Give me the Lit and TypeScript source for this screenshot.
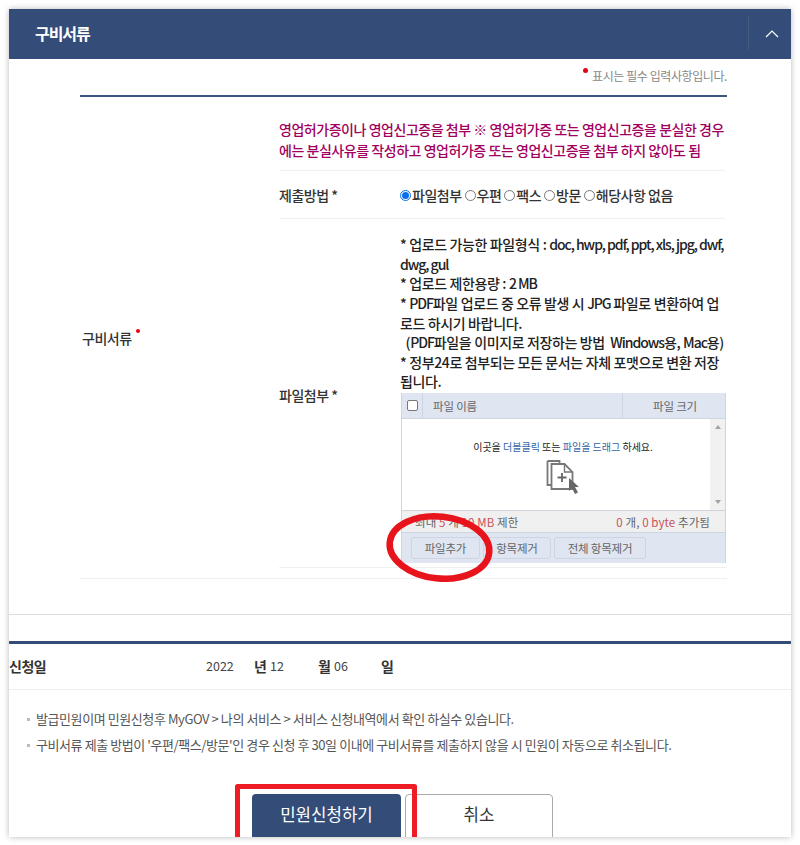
import { LitElement, html, css } from "lit";
import { customElement } from "lit/decorators.js";

@customElement("app-root")
export class AppRoot extends LitElement {
  static styles = css`
    :host { display: block; width: 800px; height: 845px; overflow: hidden; background: #fff;
      font-family: "Noto Sans CJK KR", "Liberation Sans", sans-serif; color: #333; position: relative; }
    * { box-sizing: border-box; }
    .panel { position: absolute; left: 9px; top: 9px; width: 782px; height: 828px; overflow: hidden; background: #fff;
      box-shadow: 0 0 6px rgba(0,0,0,.28); }
    .head { height: 50px; background: #344d78; color: #fff; display: flex; align-items: center; justify-content: space-between; padding-left: 26px; }
    .head h2 { margin: 0 0 3px; font-size: 16px; line-height: 20px; font-weight: 700; letter-spacing: -1.05px; }
    .toggle { width: 43px; height: 34px; border-left: 1px solid #46597f; display: flex; align-items: center; justify-content: center; margin-bottom: 2px; padding-left: 3px; }
    .body { margin: 0 64px 0 71px; }
    .note { height: 36px; display: flex; justify-content: flex-end; align-items: flex-start; padding-top: 8px; font-size: 12px; color: #888; line-height: 17px; letter-spacing: -.42px; }
    .note i { width: 5px; height: 5px; border-radius: 50%; background: #e60012; margin: 1px 4px 0 0; }
    .form { border-top: 2px solid #3d5480; display: flex; height: 484px; border-bottom: 1px solid #f0f0f0; }
    .label { width: 199px; flex: none; align-self: center; font-size: 14px; font-weight: 500; letter-spacing: -.5px; padding: 0 0 0 2px; display: flex; line-height: 20px; margin-top: 0; }
    .label i { width: 4px; height: 4px; border-radius: 50%; background: #e60012; margin: 1px 0 0 4px; }
    .cell { flex: 1; min-width: 0; }
    .warn { height: 74px; border-bottom: 1px solid #f0f0f0; padding-top: 22px; color: #a0005e; font-size: 14px; font-weight: 500; line-height: 20.5px; letter-spacing: -.46px; width: 446px; }
    .warn div { white-space: nowrap; }
    .row { display: flex; width: 446px; }
    .row.method { height: 48px; border-bottom: 1px solid #f0f0f0; align-items: center; }
    .rowlabel { width: 121px; flex: none; font-size: 14px; font-weight: 500; color: #333; letter-spacing: -.5px; }
    .radios { display: flex; align-items: center; font-size: 14px; font-weight: 500; letter-spacing: -.5px; white-space: nowrap; margin-top: 1px; }
    .r { width: 11px; height: 11px; border-radius: 50%; border: 1px solid #777; margin: 1px 1px 0 3px; flex: none; }
    .r.on { border: 1px solid #0b6fe8; margin-left: 0; position: relative; }
    .r.on::after { content: ""; position: absolute; left: 1px; top: 1px; width: 7px; height: 7px; border-radius: 50%; background: #0b6fe8; }
    .row.file { height: 349px; border-bottom: 1px solid #f0f0f0; align-items: center; width: 448px; }
    .row.file .rowlabel { margin-top: 4px; }
    .filecell { width: 326px; flex: none; align-self: flex-end; margin-bottom: 4px; }
    .rules { font-size: 14px; font-weight: 500; line-height: 19.6px; color: #222; letter-spacing: -.37px; white-space: nowrap; }
    .l { letter-spacing: -1.05px; }
    .up { height: 170px; margin-left: 1px; width: 325px; border: 1px solid #cdd5e2; border-top: 0; font-size: 11.5px; letter-spacing: -.2px; font-weight: 400; color: #666; margin-top: 1px; }
    .up .th { height: 26px; background: #dfe5f1; display: flex; align-items: center; border-bottom: 1px solid #cdd5e2; }
    .up .c0 { width: 21px; height: 100%; display: flex; align-items: center; justify-content: center; border-right: 1px solid #cdd5e2; }
    .up .c0 b { display: block; width: 11px; height: 11px; border: 1px solid #777; border-radius: 2px; background: #fff; margin-left: 1px; }
    .up .c1 { flex: 1; padding-left: 10px; height: 100%; display: flex; align-items: center; }
    .up .c2 { width: 103px; height: 100%; display: flex; align-items: center; justify-content: center; border-left: 1px solid #cdd5e2; padding-left: 2px; }
    .drop { height: 91px; display: flex; background: #fff; }
    .drop .main { flex: 1; display: flex; flex-direction: column; align-items: center; padding: 20px 0 0 14px; color: #222; font-size: 10px; letter-spacing: 0; line-height: 15px; }
    .drop .main span span { color: #2f63a8; }
    .drop .main svg { margin-top: 5px; }
    .scroll { width: 15px; background: #f1f1f1; display: flex; flex-direction: column; justify-content: space-between; align-items: center; padding: 6px 0; }
    .tri { width: 0; height: 0; border: 3.5px solid transparent; }
    .tri.u { border-bottom: 4px solid #a3a3a3; border-top: 0; }
    .tri.d { border-top: 4px solid #a3a3a3; border-bottom: 0; }
    .info { height: 23px; background: #f0f0f0; border-top: 1px solid #cfd3da; border-bottom: 1px solid #cdd5e2; display: flex; align-items: center; justify-content: space-between; padding: 0 15px 0 13px; letter-spacing: .1px; }
    .info em { font-style: normal; color: #c9505a; }
    .btns { height: 30px; background: #dfe5f1; display: flex; gap: 3px; padding: 4px 0 0 9px; }
    .btns span { height: 22px; border: 1px solid #cdd5e2; border-radius: 3px; display: flex; align-items: center; justify-content: center; }
    .b1 { width: 69px; }
    .b2 { width: 68px; }
    .b3 { width: 92px; }
    .sep1 { border-bottom: 1px solid #ddd; height: 36px; }
    .navy { margin-top: 26px; height: 3px; background: #344d78; }
    .date { height: 46px; border-bottom: 1px solid #f0f0f0; display: flex; align-items: center; font-size: 12.5px; color: #444; padding-bottom: 2px; }
    .date b { font-weight: 700; font-size: 14px; color: #333; letter-spacing: -.5px; width: 16px; flex: none; }
    .date .title { width: 197px; }
    .date .y { width: 48px; }
    .date .m1 { width: 48px; }
    .date .m2 { width: 47px; }
    .notes { margin: 20px 0 0 18px; padding: 0; list-style: none; font-size: 13px; color: #555; letter-spacing: -.42px; line-height: 18px; }
    .notes li { display: flex; align-items: center; margin-bottom: 8px; white-space: pre; }
    .notes li::before { content: ""; width: 3px; height: 3px; background: #bbb; margin-right: 6px; flex: none; }
    .actions { display: flex; margin: 40px 0 0 243px; }
    .actions div { height: 50px; border-radius: 4px 4px 0 0; display: flex; align-items: center; justify-content: center; font-size: 16.8px; padding-bottom: 10px; }
    .submit { width: 149px; background: #344d78; color: #fff; }
    .cancel { width: 148px; margin-left: 4px; border: 1px solid #aaa; color: #333; }
    .mark { position: absolute; left: 0; top: 0; pointer-events: none; }
  `;

  render() {
    return html`
      <div class="panel">
        <div class="head">
          <h2>구비서류</h2>
          <div class="toggle">
            <svg width="14" height="9" viewBox="0 0 14 9"><path d="M1 8l6-6 6 6" fill="none" stroke="#fff" stroke-width="1.2"/></svg>
          </div>
        </div>
        <div class="body">
          <div class="note"><i></i><span>표시는 필수 입력사항입니다.</span></div>
          <div class="form">
            <div class="label">구비서류<i></i></div>
            <div class="cell">
              <div class="warn">
                <div>영업허가증이나 영업신고증을 첨부 ※ 영업허가증 또는 영업신고증을 분실한 경우</div>
                <div>에는 분실사유를 작성하고 영업허가증 또는 영업신고증을 첨부 하지 않아도 됨</div>
              </div>
              <div class="row method">
                <div class="rowlabel">제출방법 *</div>
                <div class="radios">
                  <span class="r on"></span>파일첨부<span class="r"></span>우편<span class="r"></span>팩스<span class="r"></span>방문<span class="r"></span>해당사항 없음
                </div>
              </div>
              <div class="row file">
                <div class="rowlabel">파일첨부 *</div>
                <div class="filecell">
                  <div class="rules">
                    <div>* 업로드 가능한 파일형식 : <span class="l">doc, hwp, pdf, ppt, xls, jpg, dwf,</span></div>
                    <div class="l">dwg, gul</div>
                    <div>* 업로드 제한용량 : <span class="l">2 MB</span></div>
                    <div>* <span class="l">PDF</span>파일 업로드 중 오류 발생 시 <span class="l">JPG</span> 파일로 변환하여 업</div>
                    <div>로드 하시기 바랍니다.</div>
                    <div>&nbsp;&nbsp;(<span class="l">PDF</span>파일을 이미지로 저장하는 방법&nbsp;&nbsp;<span class="l">Windows</span>용, <span class="l">Mac</span>용)</div>
                    <div>* 정부24로 첨부되는 모든 문서는 자체 포맷으로 변환 저장</div>
                    <div>됩니다.</div>
                  </div>
                  <div class="up">
                    <div class="th">
                      <div class="c0"><b></b></div>
                      <div class="c1">파일 이름</div>
                      <div class="c2">파일 크기</div>
                    </div>
                    <div class="drop">
                      <div class="main">
                        <span>이곳을 <span>더블클릭</span> 또는 <span>파일을 드래그</span> 하세요.</span>
                        <svg width="34" height="36" viewBox="0 0 34 36">
                          <path d="M1.5 2h12v2M1.5 2v24h4" fill="none" stroke="#777" stroke-width="1.8"/>
                          <path d="M5.5 5h13l8 8v17h-21z" fill="#fff" stroke="#777" stroke-width="1.8"/>
                          <path d="M18.5 5v8h8" fill="none" stroke="#777" stroke-width="1.4"/>
                          <path d="M16 14v9M11.5 18.5h9" stroke="#666" stroke-width="1.8"/>
                          <path d="M23 19l0 13 3-3 3 6 3-1.5-3-5.5h4z" fill="#666"/>
                        </svg>
                      </div>
                      <div class="scroll"><i class="tri u"></i><i class="tri d"></i></div>
                    </div>
                    <div class="info">
                      <span>최대 <em>5</em> 개 <em>10 MB</em> 제한</span>
                      <span><em>0</em> 개, <em>0 byte</em> 추가됨</span>
                    </div>
                    <div class="btns">
                      <span class="b1">파일추가</span>
                      <span class="b2">항목제거</span>
                      <span class="b3">전체 항목제거</span>
                    </div>
                  </div>
                </div>
              </div>
            </div>
          </div>
        </div>
        <div class="sep1"></div>
        <div class="navy"></div>
        <div class="date">
          <b class="title">신청일</b><span class="y">2022</span><b>년</b><span class="m1">12</span><b>월</b><span class="m2">06</span><b>일</b>
        </div>
        <ul class="notes">
          <li>발급민원이며 민원신청후 MyGOV &gt; 나의 서비스 &gt; 서비스 신청내역에서 확인 하실수 있습니다.</li>
          <li>구비서류 제출 방법이 '우편/팩스/방문'인 경우 신청 후 30일 이내에 구비서류를 제출하지 않을 시 민원이 자동으로 취소됩니다.</li>
        </ul>
        <div class="actions">
          <div class="submit">민원신청하기</div>
          <div class="cancel">취소</div>
        </div>
      </div>
      <svg class="mark" width="800" height="845" viewBox="0 0 800 845">
        <ellipse cx="439.5" cy="547.5" rx="50" ry="31" transform="rotate(6 439.5 547.5)" fill="none" stroke="#e8141c" stroke-width="6.5"/>
        <path d="M237.5 837V786.5H414.5V837" fill="none" stroke="#ee1c25" stroke-width="5" stroke-linejoin="round"/>
      </svg>
    `;
  }
}
